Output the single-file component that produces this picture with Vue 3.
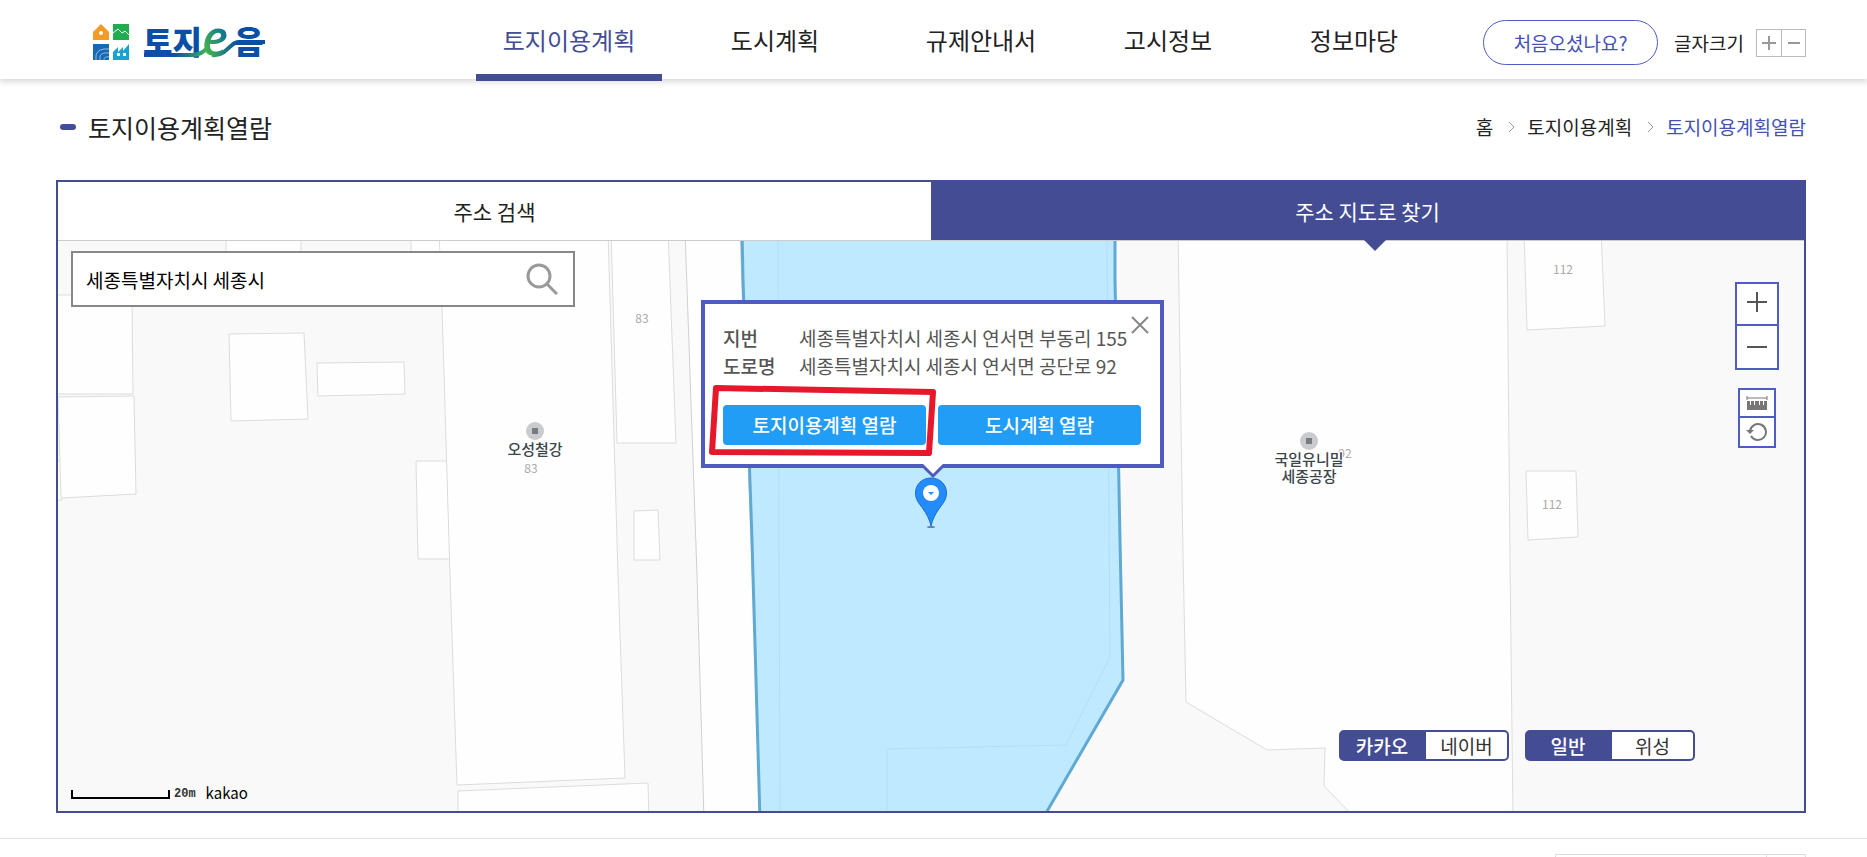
<script setup>
import { ref } from 'vue'

const menus = ['토지이용계획', '도시계획', '규제안내서', '고시정보', '정보마당']
const activeMenu = ref('토지이용계획')
const keyword = ref('세종특별자치시 세종시')
const provider = ref('카카오')
const mapType = ref('일반')
const switches = [
  { name: 'provider', model: provider, options: ['카카오', '네이버'] },
  { name: 'type', model: mapType, options: ['일반', '위성'] },
]
const addresses = [
  { label: '지번', value: '세종특별자치시 세종시 연서면 부동리 155' },
  { label: '도로명', value: '세종특별자치시 세종시 연서면 공단로 92' },
]

// Building and lot outlines, in map canvas units
const lots = [
  '226,230 301,230 301,290 226,290',
  '411,230 445,230 445,300 411,300',
  '50,295 132,295 133,394 50,394',
  '50,461 62,461 62,500 50,500',
  '58,397 134,396 136,494 61,498',
  '229,334 304,333 308,419 231,421',
  '317,363 404,362 405,394 318,396',
  '416,461 447,461 450,559 418,559',
  '439,230 608,230 618,575 625,778 457,785 450,575 442,307',
  '611,230 668,230 676,443 617,443',
  '634,511 658,510 660,560 634,560',
  '458,791 648,783 649,820 458,820',
  '1178,230 1507,230 1510,560 1513,820 1357,820 1324,786 1325,748 1267,750 1186,702 1183,555',
  '1524,230 1601,230 1605,326 1527,330',
  '1526,471 1576,471 1578,537 1528,540',
]
const lotNumbers = [
  { x: 642, y: 323, text: '83' },
  { x: 531, y: 473, text: '83' },
  { x: 1345, y: 458, text: '92' },
  { x: 1563, y: 274, text: '112' },
  { x: 1552, y: 509, text: '112' },
]
const places = [
  { x: 535, y: 431, lines: ['오성철강'] },
  { x: 1309, y: 441, lines: ['국일유니밀', '세종공장'] },
]
</script>

<template>
  <div class="page">
    <header class="header">
      <a class="logo" href="#" aria-label="토지e음">
        <svg width="180" height="76" viewBox="0 -22 180 76">
          <defs>
            <linearGradient id="swoosh" gradientUnits="userSpaceOnUse" x1="50" x2="116" y1="0" y2="0">
              <stop offset="0" stop-color="#0a4ea5" />
              <stop offset="0.45" stop-color="#0a4ea5" />
              <stop offset="1" stop-color="#3cb95a" />
            </linearGradient>
            <linearGradient id="letter" x1="0" y1="1" x2="1" y2="0">
              <stop offset="0.2" stop-color="#43b649" />
              <stop offset="0.8" stop-color="#0b6aa0" />
            </linearGradient>
            <linearGradient id="tail" gradientUnits="userSpaceOnUse" x1="118" x2="144" y1="0" y2="0">
              <stop offset="0" stop-color="#39b054" />
              <stop offset="1" stop-color="#0a4ea5" />
            </linearGradient>
          </defs>
          <path d="M0 8 8 0l8 8v8H0z" fill="#f49a25" /><circle cx="8" cy="9" r="2" fill="#fff" />
          <path d="M20 0h16v16H20z" fill="#22ac50" />
          <path d="m20 9 5-4 4 4 3-2 4 4" fill="none" stroke="#fff" />
          <path d="M0 20h16v16H0z" fill="#1769b5" />
          <path d="M3 36v-5q2-7 13-6M7 36v-4q2-4 9-3M11 36q0-4 5-3" fill="none" stroke="#8ebde2" />
          <path d="M20 28l5-5v5l5-5v4l6-7v16H20z" fill="#18a2d0" /><path d="M24 29h3v3h-3zm6 0h3v3h-3z" fill="#fff" />
          <text x="50" y="30" class="logo-text">토지</text>
          <text x="141" y="30" class="logo-text">음</text>
          <path d="M51 31h48q10 0 16-8" fill="none" stroke="url(#swoosh)" stroke-width="4" />
          <text x="109" y="32" class="logo-e">e</text>
          <path d="M119 31q6 1 12-3l8-7q3-3 7-3h26" fill="none" stroke="url(#tail)" stroke-width="4" />
        </svg>
      </a>
      <nav class="menu">
        <a
          v-for="m in menus"
          :key="m"
          href="#"
          :class="{ active: m === activeMenu }"
          @click.prevent="activeMenu = m"
        >{{ m }}</a>
      </nav>
      <div class="utils">
        <button class="guide">처음오셨나요?</button>
        <span>글자크기</span>
        <div class="font-size">
          <button aria-label="글자 크게"><svg width="14" height="14"><path d="M0 7h14M7 0v14" /></svg></button>
          <button aria-label="글자 작게"><svg width="14" height="14"><path d="M1 7h12" /></svg></button>
        </div>
      </div>
    </header>

    <main class="content">
      <div class="title-row">
        <h1>토지이용계획열람</h1>
        <nav class="crumbs">
          <a href="#">홈</a>
          <svg width="6" height="12"><path d="m0 1 5 5-5 5" /></svg>
          <a href="#">토지이용계획</a>
          <svg width="6" height="12"><path d="m0 1 5 5-5 5" /></svg>
          <a href="#" class="current">토지이용계획열람</a>
        </nav>
      </div>

      <section class="finder">
        <div class="tabs">
          <button>주소 검색</button>
          <button class="active">주소 지도로 찾기</button>
        </div>

        <div class="map">
          <svg class="canvas" viewBox="58 241 1746 570" preserveAspectRatio="xMidYMid slice">
            <rect x="0" y="200" width="1900" height="650" fill="#f9f9f9" />
            <polygon class="road" points="685,230 697,575 704,820 761,820 740,230" />
            <polygon v-for="p in lots" :key="p" class="lot" :points="p" />
            <polygon class="parcel" points="742,230 743,280 752,540 760,820 1042,820 1123,680 1120,540 1115,280 1115,230" />
            <path class="inner" d="M778 241 780 811M1107 241l3 416-44 88-179 4v62" />
            <text v-for="n in lotNumbers" :key="n.x" class="lot-no" :x="n.x" :y="n.y">{{ n.text }}</text>
            <g v-for="p in places" :key="p.x">
              <circle :cx="p.x" :cy="p.y" r="9" fill="#c9cbce" />
              <rect :x="p.x - 3" :y="p.y - 3" width="6" height="6" fill="#767c7f" />
              <text
                v-for="(line, i) in p.lines"
                :key="line"
                class="place"
                :x="p.x"
                :y="p.y + 24 + i * 17"
              >{{ line }}</text>
            </g>
          </svg>

          <form class="search" @submit.prevent>
            <input v-model="keyword" type="text" aria-label="주소" />
            <button aria-label="검색">
              <svg width="32" height="32"><circle cx="13" cy="13" r="11" /><path d="m21 21 10 10" /></svg>
            </button>
          </form>

          <svg class="pin" width="32" height="52" viewBox="0 0 32 52">
            <ellipse cx="16" cy="50" rx="4" ry="1" fill="#5f7fae" />
            <path d="M16 1C7 1 .5 7.500 .5 16c0 6 3 10 7 15 4 6 7 11 8.500 18C17.500 42 20.500 37 24.500 31c4-5 7-9 7-15C31.500 7.500 25 1 16 1z" fill="#238cfa" stroke="#1c6fcf" />
            <circle cx="16" cy="16" r="8" fill="#fff" />
            <path d="M13 15h6l-3 3z" fill="#238cfa" />
          </svg>

          <div class="popup">
            <button class="close" aria-label="닫기">
              <svg width="18" height="18"><path d="m1 1 16 16M17 1 1 17" /></svg>
            </button>
            <dl>
              <div v-for="a in addresses" :key="a.label">
                <dt>{{ a.label }}</dt>
                <dd>{{ a.value }}</dd>
              </div>
            </dl>
            <div class="actions">
              <button>토지이용계획 열람</button>
              <button>도시계획 열람</button>
            </div>
            <svg class="tip" width="28" height="16"><path d="M2 0 14 12 26 0" /></svg>
            <svg class="highlight" width="230" height="74"><path d="M8 4 225 8 221 69 4 68z" /></svg>
          </div>

          <div class="controls">
            <div class="zoom">
              <button aria-label="확대"><svg width="20" height="20"><path d="M0 10h20M10 0v20" /></svg></button>
              <button aria-label="축소"><svg width="20" height="20"><path d="M0 10h20" /></svg></button>
            </div>
            <div class="tools">
              <button aria-label="거리 재기">
                <svg width="22" height="16"><path d="M1 3h20M1 1v4M21 1v4" class="thin" /><path d="M1 6h3v4h1V6h3v4h1V6h4v4h1V6h3v4h1V6h3v9H1z" class="solid" /></svg>
              </button>
              <button aria-label="초기화">
                <svg width="22" height="20"><path d="M5 14a8 8 0 1 0-1-5" class="arc" /><path d="M0 8h8l-4 4z" class="solid" /></svg>
              </button>
            </div>
          </div>

          <div class="switches">
            <div v-for="s in switches" :key="s.name" class="switch">
              <button
                v-for="o in s.options"
                :key="o"
                :class="{ on: s.model.value === o }"
                @click="s.model.value = o"
              >{{ o }}</button>
            </div>
          </div>

          <div class="scale">
            <span class="bar"></span>
            <span class="distance">20m</span>
            <span class="brand">kakao</span>
          </div>
        </div>
      </section>
    </main>

    <footer class="footer">
      <div class="sites">
        <select aria-label="관련 사이트"></select>
        <button aria-label="이동"></button>
      </div>
    </footer>
  </div>
</template>

<style>
body {
  margin: 0;
  background: #fff;
}
</style>

<style scoped>
.page {
  height: 100vh;
  overflow: hidden;
  font-family: "Noto Sans CJK KR", "Noto Sans", sans-serif;
  font-size: 19px;
  line-height: 28px;
  color: #222;
}
.page * {
  box-sizing: border-box;
}
svg {
  display: block;
}
a {
  color: inherit;
  text-decoration: none;
}
button,
input,
select {
  margin: 0;
  padding: 0;
  border: 0;
  background: none;
  font: inherit;
  color: inherit;
}
.header {
  position: relative;
  display: flex;
  align-items: center;
  height: 79px;
  padding: 0 61px 0 93px;
  background: #fff;
  box-shadow: 0 2px 6px 1px #00000026;
}
.logo {
  padding-top: 1px;
}
.logo-text {
  font-size: 32px;
  font-weight: 900;
  fill: #0a4ea5;
}
.logo-e {
  font: italic 600 49px "Open Sans", sans-serif;
  fill: url(#letter);
}
.menu {
  display: grid;
  grid-template-columns: 206px 206px 206px 168px 204px;
  justify-items: center;
  margin-left: 193px;
  font-size: 24px;
}
.menu a {
  height: 81px;
  margin-top: 2px;
  padding: 0 27px;
  line-height: 79px;
}
.menu .active {
  border-bottom: 7px solid #444d94;
  color: #444d94;
}
.utils {
  display: flex;
  align-items: center;
  margin: 6px 0 0 auto;
}
.guide {
  width: 175px;
  height: 45px;
  margin-right: 16px;
  border: 1px solid #4f5cc4;
  border-radius: 23px;
  color: #4452b4;
}
.font-size {
  display: flex;
  margin-left: 12px;
  border: 1px solid #bbb;
}
.font-size button {
  display: grid;
  place-items: center;
  width: 24px;
  height: 26px;
}
.font-size button + button {
  border-left: 1px solid #bbb;
}
.font-size path {
  stroke: #999;
  stroke-width: 2;
}
.content {
  padding: 0 61px 25px 56px;
}
.title-row {
  display: flex;
  align-items: center;
  justify-content: space-between;
  height: 101px;
  padding-bottom: 6px;
}
h1 {
  display: flex;
  align-items: center;
  gap: 12px;
  margin: 0 0 0 4px;
  font-size: 25px;
  font-weight: 400;
}
h1::before {
  content: "";
  width: 16px;
  height: 6px;
  border-radius: 3px;
  background: #444d94;
}
.crumbs {
  display: flex;
  align-items: center;
  gap: 12px;
}
.crumbs svg {
  margin-left: 4px;
}
.crumbs path {
  fill: none;
  stroke: #999;
}
.crumbs .current {
  color: #4452b4;
}
.finder {
  border: 2px solid #444d94;
}
.tabs {
  display: grid;
  grid-template-columns: 1fr 1fr;
  border-bottom: 1px solid #ccc;
}
.tabs button {
  position: relative;
  height: 58px;
  font-size: 21px;
}
.tabs .active {
  background: #444d94;
  color: #fff;
}
.tabs .active::after {
  content: "";
  position: absolute;
  z-index: 1;
  top: 100%;
  left: calc(50% - 4px);
  border: 11px solid transparent;
  border-top-color: #444d94;
  border-bottom: 0;
}
.map {
  position: relative;
  height: 570px;
  overflow: hidden;
}
.canvas {
  width: 100%;
  height: 100%;
}
.lot,
.road {
  fill: #fefefe;
  stroke: #dcdcdc;
}
.road {
  stroke: #d0d0d0;
}
.parcel {
  fill: #bfe9ff;
  stroke: #5fa9d3;
  stroke-width: 3;
}
.inner {
  fill: none;
  stroke: #b0dff5;
}
.lot-no {
  font-size: 12px;
  text-anchor: middle;
  fill: #aaa;
}
.place {
  font-size: 15px;
  font-weight: 500;
  text-anchor: middle;
  fill: #3b454b;
  stroke: #fff;
  stroke-width: 2px;
  paint-order: stroke;
}
.search {
  position: absolute;
  top: 10px;
  left: 13px;
  display: flex;
  align-items: center;
  width: 504px;
  height: 56px;
  padding: 0 15px 0 13px;
  border: 2px solid #888;
  background: #fff;
  color: #000;
}
.search input {
  flex: 1;
  height: 48px;
  outline: 0;
}
.search svg {
  fill: none;
  stroke: #999;
  stroke-width: 3;
}
.pin {
  position: absolute;
  top: 236px;
  left: calc(50% - 16px);
}
.popup {
  position: absolute;
  top: 59px;
  left: calc(50% - 230px);
  width: 463px;
  padding: 20px 19px 19px 18px;
  border: 4px solid #4f5bbe;
  background: #fff;
  color: #555;
}
.popup dl {
  margin: 0 0 25px;
}
.popup dl div {
  display: flex;
}
.popup dt {
  width: 76px;
  font-weight: 500;
}
.popup dd {
  margin: 0;
  white-space: nowrap;
}
.close {
  position: absolute;
  top: 12px;
  right: 11px;
}
.close path {
  stroke: #888;
  stroke-width: 2;
}
.actions {
  display: grid;
  grid-template-columns: 1fr 1fr;
  gap: 12px;
}
.actions button {
  height: 40px;
  border-radius: 4px;
  background: #219df5;
  font-weight: 500;
  color: #fff;
}
.tip {
  position: absolute;
  top: 100%;
  left: 214px;
}
.tip path {
  fill: #fff;
  stroke: #4f5bbe;
  stroke-width: 3;
}
.highlight {
  position: absolute;
  top: 80px;
  left: 3px;
  pointer-events: none;
}
.highlight path {
  fill: none;
  stroke: #e5182c;
  stroke-width: 6;
  stroke-linejoin: round;
}
.controls {
  position: absolute;
  top: 41px;
  right: 25px;
  display: grid;
  justify-items: center;
  gap: 18px;
}
.zoom,
.tools {
  border: 2px solid #4f5cc4;
  background: #fff;
}
.zoom button,
.tools button {
  display: grid;
  place-items: center;
}
.zoom button {
  width: 40px;
  height: 40px;
  padding-bottom: 4px;
}
.zoom button + button {
  height: 44px;
  padding: 0;
}
.tools button {
  width: 34px;
  height: 26px;
}
.tools button + button {
  height: 30px;
}
.controls button + button {
  border-top: 2px solid #4f5cc4;
}
.zoom path {
  stroke: #555;
  stroke-width: 2;
}
.thin {
  stroke: #777;
}
.solid {
  fill: #777;
}
.arc {
  fill: none;
  stroke: #777;
  stroke-width: 2;
}
.switches {
  position: absolute;
  right: 109px;
  bottom: 50px;
  display: flex;
  gap: 16px;
}
.switch {
  display: grid;
  grid-template-columns: 85px 81px;
  border: 2px solid #444d94;
  border-radius: 5px;
  background: #fff;
}
.switch button {
  height: 27px;
  line-height: 26px;
  color: #333;
}
.switch .on {
  padding-right: 3px;
  background: #444d94;
  font-weight: 500;
  color: #fff;
}
.scale {
  position: absolute;
  left: 13px;
  bottom: 12px;
  display: flex;
  align-items: flex-end;
  line-height: 12px;
  color: #000;
}
.bar {
  width: 99px;
  height: 9px;
  border: 2px solid #000;
  border-top: 0;
}
.distance {
  margin: 0 10px 0 4px;
  font: bold 12px/10px "Liberation Mono", monospace;
  color: #333;
}
.brand {
  font-size: 15px;
}
.footer {
  display: flex;
  justify-content: flex-end;
  padding: 15px 61px 20px 56px;
  border-top: 1px solid #e2e2e2;
}
.sites {
  display: flex;
  width: 251px;
  height: 44px;
  border: 1px solid #ddd;
}
.sites select {
  flex: 1;
  appearance: none;
}
.sites button {
  width: 39px;
  border-left: 1px solid #ddd;
}
</style>
